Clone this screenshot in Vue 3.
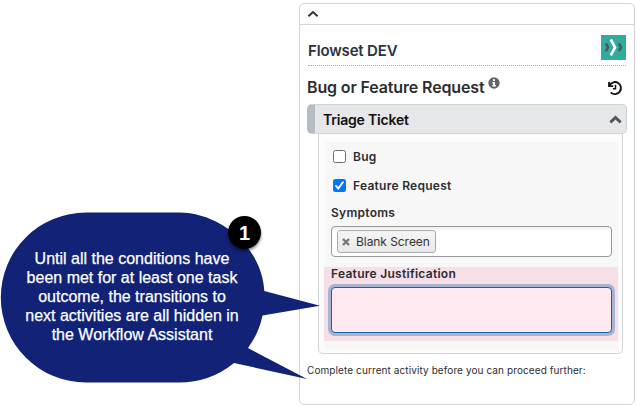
<script setup>
import { ref } from 'vue'

const options = ref([
  { label: 'Bug', checked: false },
  { label: 'Feature Request', checked: true },
])
const symptoms = ref(['Blank Screen'])
const noteLines = [
  'Until all the conditions have',
  'been met for at least one task',
  'outcome, the transitions to',
  'next activities are all hidden in',
  'the Workflow Assistant',
]
</script>

<template>
  <main class="page">
    <section class="panel">
      <header class="panel-head">
        <svg class="chev" viewBox="0 0 12 8"><path d="M1.400 6.300 6 2l4.600 4.300" fill="none" stroke="#2b343c" stroke-width="2" /></svg>
      </header>
      <div class="panel-body">
        <div class="app-row">
          <span class="app-name">Flowset DEV</span>
          <svg class="logo" viewBox="0 0 25 25">
            <rect width="25" height="25" fill="#30ab9d" />
            <path d="M5 8.500 7 12.300 5 16.200M18 8.500l2 3.800-2 3.900" fill="none" stroke="#47595a" stroke-width="2.500" />
            <path d="M9.800 4.500 14 12.400 9.800 20.400" fill="none" stroke="#fff" stroke-width="2.700" />
          </svg>
        </div>
        <div class="title-row">
          <h1>Bug or Feature Request</h1>
          <svg class="info" viewBox="0 0 12 12">
            <circle cx="6" cy="6" r="5.700" fill="#666" />
            <path d="M5 2.300h2v1.600H5zM4.300 4.900H7v3.200h.8v1.300H4.300V8.100h.8V6.200h-.8z" fill="#fff" />
          </svg>
          <svg class="history" viewBox="0 0 16 16">
            <path d="M2.600 5.400A6 6 0 1 1 3.700 12.300" fill="none" stroke="#111" stroke-width="1.900" />
            <path d="M2 2v4.200h4.200" fill="none" stroke="#111" stroke-width="1.800" />
            <path d="M8.500 4.800v3.900H6" fill="none" stroke="#111" stroke-width="1.500" />
          </svg>
        </div>
        <div class="group-head">
          <span>Triage Ticket</span>
          <svg class="group-chev" viewBox="0 0 12 8"><path d="M1.300 6.700 6 2.200l4.700 4.500" fill="none" stroke="#555" stroke-width="2.700" /></svg>
        </div>
        <div class="group-body">
          <div class="form">
            <label v-for="o in options" :key="o.label" class="option">
              <span class="box" :class="{ on: o.checked }">
                <svg v-if="o.checked" viewBox="0 0 13 13"><path d="M3 6.900 5.300 9.400 9.900 3.300" fill="none" stroke="#fff" stroke-width="1.900" stroke-linecap="round" /></svg>
              </span>
              <span>{{ o.label }}</span>
            </label>
            <div class="label symptoms">Symptoms</div>
            <div class="select">
              <span v-for="s in symptoms" :key="s" class="tag">
                <svg class="remove" viewBox="0 0 8 8"><path d="m1 1 6 6M7 1 1 7" stroke="#777" stroke-width="2.300" /></svg>
                <span>{{ s }}</span>
              </span>
            </div>
            <div class="required">
              <div class="label">Feature Justification</div>
              <div class="textarea"></div>
            </div>
          </div>
        </div>
        <p class="hint">Complete current activity before you can proceed further:</p>
      </div>
    </section>

    <aside class="callout">
      <svg class="bubble" viewBox="0 0 310 175">
        <path d="M86 .5H179C220 .5 262 35 264.300 79L320 93.700 262.500 103.500Q259 121 248 136L307 167 234 151Q210 170.500 179 170.500H86A85.200 85 0 0 1 86 .5Z" fill="#112277" />
      </svg>
      <p class="note"><span v-for="line in noteLines" :key="line">{{ line }}</span></p>
      <span class="badge">1</span>
    </aside>
  </main>
</template>

<style>
body { margin: 0; background: #fff; }
</style>

<style scoped>
* { box-sizing: border-box; }
.page { position: relative; width: 637px; height: 407px; overflow: hidden; padding: 3px 2px 0 299px; font-family: Inter, "Liberation Sans", sans-serif; color: #2d2d2f; }
.panel { width: 336px; height: 402px; border: 1px solid #d3d6d8; border-radius: 5px; background: #fff; }
.panel-head { display: flex; align-items: center; height: 21px; padding-left: 7px; border-bottom: 1px solid #d3d6d8; }
.chev { width: 12px; height: 8px; }
.panel-body { padding: 10px 7px 0; }
.app-row { display: flex; align-items: flex-start; justify-content: space-between; height: 31px; margin: 0 1px; border-bottom: 1px dotted #aaa; }
.app-name { padding-top: 6px; font-size: 15px; line-height: 20px; font-weight: 600; letter-spacing: -.17px; color: #29343f; white-space: nowrap; }
.logo { width: 25px; height: 25px; }
.title-row { display: flex; align-items: flex-start; height: 38px; }
h1 { margin: 11px 0 0; font-size: 16px; line-height: 21px; font-weight: 600; letter-spacing: -.14px; white-space: nowrap; }
.info { width: 12px; height: 12px; margin: 11px 0 0 4px; }
.history { width: 16px; height: 16px; margin: 14px 4px 0 auto; }
.group-head { display: flex; align-items: center; justify-content: space-between; height: 30px; padding: 0 4px 0 8px; border: 1px solid #ced4d7; border-left: 8px solid #b4bdc3; border-radius: 5px; background: #e6e7e9; font-size: 14px; font-weight: 600; letter-spacing: -.2px; color: #111; }
.group-chev { width: 13px; height: 9px; }
.group-body { width: 305px; height: 220px; margin-left: 11px; padding: 8px 4px 0 6px; border: 1px solid #d3d6d8; border-top: 0; border-radius: 0 0 5px 5px; background: #fcfcfc; }
.form { height: 207px; background: #f7f7f7; }
.option { display: flex; align-items: center; gap: 7px; height: 29px; padding-left: 8px; font-size: 12px; font-weight: 600; letter-spacing: .27px; }
.box { display: flex; width: 13px; height: 13px; border: 1px solid #707070; border-radius: 2.500px; background: #fff; }
.box.on { border: 0; background: #0075ff; }
.box svg { width: 13px; height: 13px; }
.label { font-size: 12px; font-weight: 600; line-height: 15px; letter-spacing: .28px; }
.symptoms { padding: 5px 0 0 6px; height: 26px; }
.select { display: flex; align-items: flex-start; width: 281px; height: 31px; margin-left: 6px; padding: 3px 5px; border: 1px solid #999; border-radius: 4px; background: linear-gradient(#eee, #fff 4px); }
.tag { display: flex; align-items: center; width: 99px; height: 23px; padding-left: 4px; gap: 6px; border: 1px solid #aaa; border-radius: 3px; background: linear-gradient(#f4f4f4, #eaeaea); font-size: 12px; letter-spacing: -.06px; color: #333; white-space: nowrap; }
.remove { width: 8px; height: 8px; }
.required { height: 74px; margin: 10px 0 0 -1px; padding-left: 7px; background: #f6dfe7; }
.required .label { height: 20px; line-height: 14px; }
.textarea { width: 281px; height: 46px; border: 1px solid #185fa8; border-radius: 4px; background: #ffe8ef; box-shadow: 0 0 0 3px #a6b3d2; }
.hint { margin: 9px 0 0; font-size: 10px; line-height: 14px; letter-spacing: .095px; white-space: nowrap; }
.callout { position: absolute; left: 0; top: 212px; width: 320px; height: 175px; }
.bubble { display: block; width: 310px; height: 175px; overflow: visible; }
.note { position: absolute; left: 0; top: 37px; display: flex; flex-direction: column; align-items: center; width: 264px; margin: 0; font: 16px/19px "Liberation Sans", Arial, sans-serif; color: #fff; white-space: nowrap; -webkit-text-stroke: .25px #fff; }
.badge { position: absolute; left: 228px; top: 4px; width: 33px; height: 33px; border-radius: 50%; background: #000; box-shadow: 0 2px 3px rgba(0, 0, 0, .5); font: bold 20px/35px "Liberation Sans", Arial, sans-serif; text-align: center; color: #fff; }
</style>
